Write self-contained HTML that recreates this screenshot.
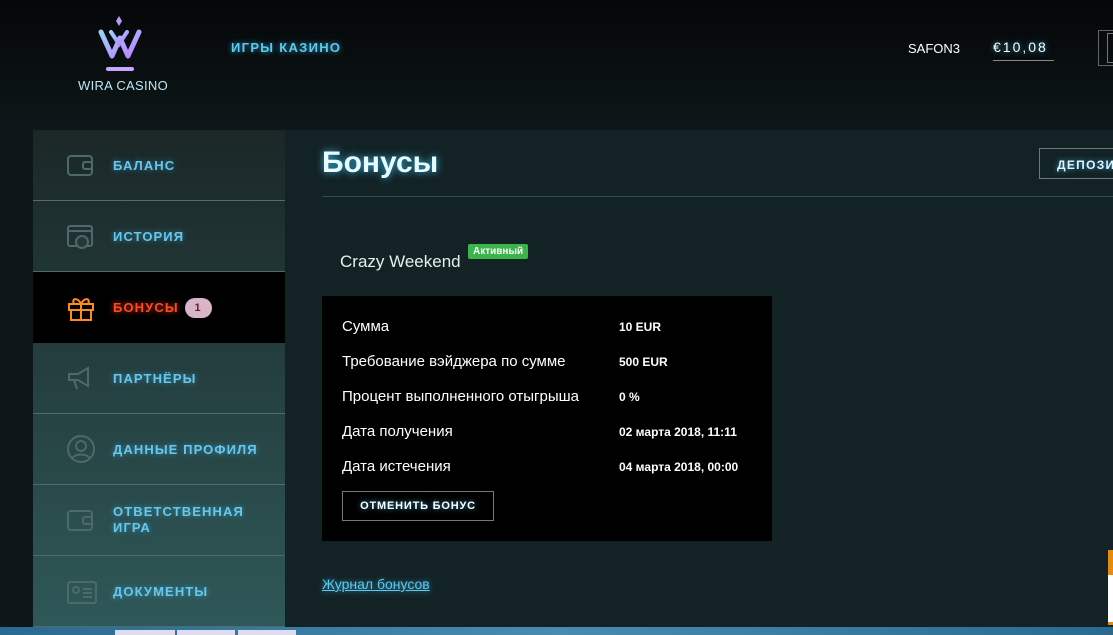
<!DOCTYPE html>
<html><head><meta charset="utf-8"><style>
*{margin:0;padding:0;box-sizing:border-box}
body{width:1113px;height:635px;overflow:hidden;background:linear-gradient(#050607,#0d1719 130px,#0d1719);font-family:"Liberation Sans",sans-serif;position:relative;color:#fff}
.glow{text-shadow:0 0 6px rgba(60,190,240,.8)}
.nav{position:absolute;left:231px;top:40px;font-size:13px;font-weight:bold;letter-spacing:1.3px;color:#5fc8ee}
.side{position:absolute;left:33px;top:130px;width:252px;height:497px;background:linear-gradient(#1b2727,#2f5858)}
.it{height:71px;border-bottom:1px solid #4b6d6d;position:relative;display:flex;align-items:center;padding-left:80px;font-size:13px;font-weight:bold;letter-spacing:1.1px;color:#69c6ec;text-shadow:0 0 6px rgba(60,190,240,.6)}
.it svg{position:absolute;left:33px;top:50%;transform:translateY(-50%)}
.act{background:#000;color:#ff4a20;text-shadow:0 0 6px rgba(255,70,20,.8);border-bottom:none}
.main{position:absolute;left:285px;top:130px;width:828px;height:497px;background:#132224}
.row{display:flex;font-size:15px;height:35px;align-items:center;color:#fff}
.row span:first-child{width:277px}
.row b{font-size:12px}
</style></head><body>
<svg style="position:absolute;left:94px;top:14px" width="56" height="60" viewBox="0 0 56 60">
<defs><linearGradient id="g" x1="0" y1="0" x2="1" y2="1"><stop offset="0" stop-color="#9ad0ff"/><stop offset="1" stop-color="#c080ff"/></linearGradient></defs>
<path d="M25 2l3 5-3 5-3-5z" fill="#b89aff"/>
<path d="M7 18l11 24 8-18 8 18 11-24" fill="none" stroke="url(#g)" stroke-width="5" stroke-linejoin="round" stroke-linecap="round"/>
<path d="M17 18l8 12 8-12" fill="none" stroke="url(#g)" stroke-width="4" stroke-linecap="round"/>
<rect x="12" y="53" width="28" height="4" rx="2" fill="#c8a8ff"/>
</svg>
<div style="position:absolute;left:78px;top:78px;font-size:13px;color:#bfe4f4;letter-spacing:.3px">WIRA CASINO</div>
<div class="nav glow">ИГРЫ КАЗИНО</div>
<div style="position:absolute;left:908px;top:41px;font-size:13px;color:#fff">SAFON3</div>
<div style="position:absolute;left:993px;top:39px;font-size:14px;letter-spacing:2px;color:#fff;border-bottom:1px solid #888;padding-bottom:5px;width:61px" class="glow">€10,08</div>
<div style="position:absolute;left:1098px;top:30px;width:15px;height:36px;border:1px solid #666;border-right:none"></div>
<div style="position:absolute;left:1107px;top:33px;width:6px;height:30px;border:1px solid #777;border-right:none"></div>
<div class="side">
<div class="it"><svg width="28" height="24"><rect x="2" y="3" width="24" height="19" rx="3" fill="none" stroke="#4c6a6a" stroke-width="2"/><rect x="17" y="9" width="9" height="7" rx="2" fill="none" stroke="#4c6a6a" stroke-width="2"/></svg>БАЛАНС</div>
<div class="it"><svg width="28" height="28"><rect x="2" y="4" width="24" height="20" rx="2" fill="none" stroke="#4c6a6a" stroke-width="2"/><line x1="2" y1="9" x2="26" y2="9" stroke="#4c6a6a" stroke-width="2"/><circle cx="16" cy="20" r="6" fill="#27383a" stroke="#4c6a6a" stroke-width="2"/></svg>ИСТОРИЯ</div>
<div class="it act"><svg width="30" height="26"><rect x="3" y="9" width="24" height="6" fill="none" stroke="#ff8a1c" stroke-width="2"/><rect x="5" y="15" width="20" height="10" fill="none" stroke="#ff8a1c" stroke-width="2"/><line x1="15" y1="9" x2="15" y2="25" stroke="#ff8a1c" stroke-width="2"/><path d="M15 9c-3-7-10-6-7 0M15 9c3-7 10-6 7 0" fill="none" stroke="#ff8a1c" stroke-width="2"/></svg>БОНУСЫ <span style="display:inline-block;margin-left:6px;width:27px;height:20px;border-radius:10px;background:#d8b6c8;color:#6a1a2a;font-size:11px;text-align:center;line-height:20px;text-shadow:none">1</span></div>
<div class="it"><svg width="32" height="26"><path d="M3 9h9l10-6v18l-10-6H3z M8 15l3 9" fill="none" stroke="#4c6a6a" stroke-width="2"/></svg>ПАРТНЁРЫ</div>
<div class="it"><svg width="30" height="30"><circle cx="15" cy="15" r="13" fill="none" stroke="#4c6a6a" stroke-width="2"/><circle cx="15" cy="12" r="5" fill="none" stroke="#4c6a6a" stroke-width="2"/><path d="M6 25c2-6 16-6 18 0" fill="none" stroke="#4c6a6a" stroke-width="2"/></svg>ДАННЫЕ ПРОФИЛЯ</div>
<div class="it" style="line-height:16px"><svg width="28" height="24"><rect x="2" y="3" width="24" height="19" rx="3" fill="none" stroke="#4c6a6a" stroke-width="2"/><rect x="17" y="9" width="9" height="7" rx="2" fill="none" stroke="#4c6a6a" stroke-width="2"/></svg>ОТВЕТСТВЕННАЯ<br>ИГРА</div>
<div class="it"><svg width="32" height="28"><rect x="2" y="5" width="28" height="21" rx="2" fill="none" stroke="#4c6a6a" stroke-width="2"/><circle cx="10" cy="13" r="3" fill="none" stroke="#4c6a6a" stroke-width="2"/><path d="M17 12h9M17 16h9M17 20h9" stroke="#4c6a6a" stroke-width="2"/></svg>ДОКУМЕНТЫ</div>
</div>
<div class="main">
<div style="position:absolute;left:37px;top:16px;font-size:30px;font-weight:bold;color:#e8fbff;text-shadow:0 0 8px rgba(60,200,255,.9)">Бонусы</div>
<div style="position:absolute;left:754px;top:18px;width:90px;height:31px;border:1px solid #6a7a7a;font-size:12px;font-weight:bold;letter-spacing:1.3px;color:#e0f4ff;padding:9px 0 0 17px" class="glow">ДЕПОЗИТ</div>
<div style="position:absolute;left:37px;top:66px;width:791px;height:1px;background:#2d5252"></div>
<div style="position:absolute;left:55px;top:122px;font-size:17px;color:#e8eeee">Crazy Weekend</div>
<div style="position:absolute;left:183px;top:114px;background:#3bb54a;font-size:10px;font-weight:bold;padding:2px 5px;border-radius:2px;color:#fff">Активный</div>
<div style="position:absolute;left:37px;top:166px;width:450px;height:245px;background:#000;padding:13px 20px">
<div class="row"><span>Сумма</span><b>10 EUR</b></div>
<div class="row"><span>Требование вэйджера по сумме</span><b>500 EUR</b></div>
<div class="row"><span>Процент выполненного отыгрыша</span><b>0 %</b></div>
<div class="row"><span>Дата получения</span><b>02 марта 2018, 11:11</b></div>
<div class="row"><span>Дата истечения</span><b>04 марта 2018, 00:00</b></div>
<div style="margin-top:7px;width:152px;height:30px;border:1px solid #777;font-size:11px;font-weight:bold;letter-spacing:.8px;text-align:center;line-height:28px" class="glow">ОТМЕНИТЬ БОНУС</div>
</div>
<div style="position:absolute;left:37px;top:446px;font-size:14px;color:#5fc8ee;text-decoration:underline" class="glow">Журнал бонусов</div>
<div style="position:absolute;left:823px;top:420px;width:5px;height:75px;background:#fff;border-top:25px solid #e88a10;border-bottom:3px solid #e88a10"></div>
</div>
<div style="position:absolute;left:0;top:627px;width:1113px;height:8px;background:linear-gradient(90deg,#2a6a90,#4a8ab0,#2a6a90)"></div>
<div style="position:absolute;left:115px;top:630px;width:60px;height:5px;background:#dde"></div>
<div style="position:absolute;left:177px;top:630px;width:58px;height:5px;background:#dde"></div>
<div style="position:absolute;left:238px;top:630px;width:58px;height:5px;background:#dde"></div>
</body></html>
